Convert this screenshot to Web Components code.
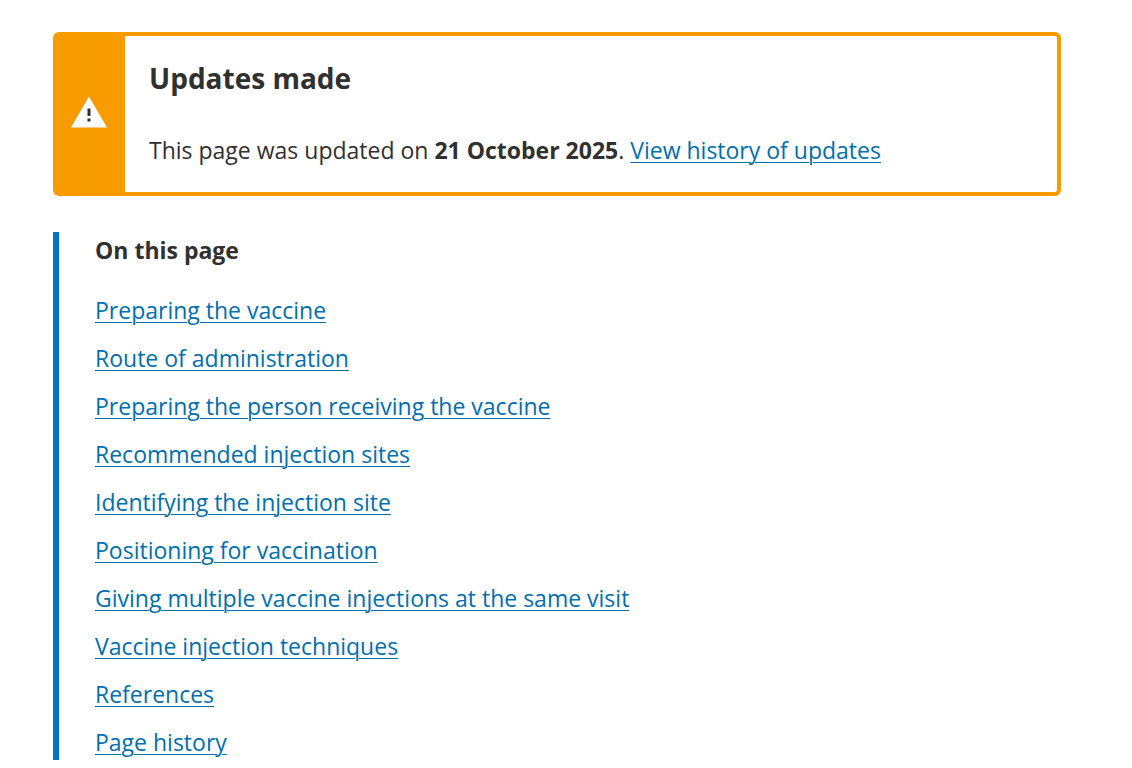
<!DOCTYPE html>
<html lang="en">
<head>
<meta charset="utf-8">
<title>Updates made</title>
<style>
  body {
    margin: 0;
    background: #fff;
    color: #303030;
    font-family: "Segoe UI", "Open Sans", sans-serif;
    font-size: 23px;
    line-height: 36px;
    --link: #006fb0;
    --bar: #0073c5;
    --warning: #f79b00;
  }

  main {
    display: flex;
    flex-direction: column;
    gap: 36px;
    padding: 32px 71px 8px 53px;
  }

  a {
    color: var(--link);
    text-underline-offset: 3px;
    text-decoration-thickness: 1px;
  }
</style>
</head>
<body>
<main>
  <alert-box>
    <span slot="title">Updates made</span>
    This page was updated on <strong>21 October 2025</strong>. <a href="#history">View history of updates</a>
  </alert-box>

  <page-contents>
    <span slot="title">On this page</span>
    <contents-item href="#preparing-vaccine">Preparing the vaccine</contents-item>
    <contents-item href="#route">Route of administration</contents-item>
    <contents-item href="#preparing-person">Preparing the person receiving the vaccine</contents-item>
    <contents-item href="#sites">Recommended injection sites</contents-item>
    <contents-item href="#identifying">Identifying the injection site</contents-item>
    <contents-item href="#positioning">Positioning for vaccination</contents-item>
    <contents-item href="#multiple">Giving multiple vaccine injections at the same visit</contents-item>
    <contents-item href="#techniques">Vaccine injection techniques</contents-item>
    <contents-item href="#references">References</contents-item>
    <contents-item href="#history">Page history</contents-item>
  </page-contents>
</main>

<script>
  const alertTemplate = document.createElement('template');
  alertTemplate.innerHTML = `
    <style>
      :host {
        display: flex;
        border: 4px solid var(--warning);
        border-left: 0;
        border-radius: 6px;
      }

      .icon {
        display: flex;
        align-items: center;
        justify-content: center;
        flex: none;
        width: 72px;
        background: var(--warning);
        border-radius: 2px 0 0 2px;
      }

      svg {
        display: block;
        width: 36px;
        height: 36px;
      }

      .content {
        flex: 1;
        padding: 24px;
      }

      h2 {
        margin: 0 0 36px;
        font-size: 28px;
        line-height: 36px;
      }

      p {
        margin: 0;
      }
    </style>

    <div class="icon">
      <svg viewBox="0 0 36 36" aria-hidden="true">
        <path d="M18 0.5L36 31.5H0z" fill="#fff"/>
        <path d="M16.5 12.5h3v7.5h-3zM16.5 22.5h3v3h-3z" fill="#303030"/>
      </svg>
    </div>
    <div class="content">
      <h2><slot name="title"></slot></h2>
      <p><slot></slot></p>
    </div>
  `;

  class AlertBox extends HTMLElement {
    constructor() {
      super();
      this.attachShadow({ mode: 'open' }).appendChild(
        alertTemplate.content.cloneNode(true)
      );
    }
  }

  const contentsTemplate = document.createElement('template');
  contentsTemplate.innerHTML = `
    <style>
      :host {
        display: block;
        padding-left: 36px;
        border-left: 6px solid var(--bar);
      }

      h2 {
        margin: 0 0 24px;
        font-size: inherit;
      }

      .list {
        display: flex;
        flex-direction: column;
        gap: 12px;
      }
    </style>

    <nav aria-labelledby="title">
      <h2 id="title"><slot name="title"></slot></h2>
      <div class="list" role="list"><slot></slot></div>
    </nav>
  `;

  class PageContents extends HTMLElement {
    constructor() {
      super();
      this.attachShadow({ mode: 'open' }).appendChild(
        contentsTemplate.content.cloneNode(true)
      );
    }
  }

  const itemTemplate = document.createElement('template');
  itemTemplate.innerHTML = `
    <style>
      :host {
        display: block;
      }

      a {
        color: var(--link);
        text-underline-offset: 3px;
        text-decoration-thickness: 1px;
      }
    </style>

    <a><slot></slot></a>
  `;

  class ContentsItem extends HTMLElement {
    constructor() {
      super();
      this.attachShadow({ mode: 'open' }).appendChild(
        itemTemplate.content.cloneNode(true)
      );
    }

    connectedCallback() {
      this.setAttribute('role', 'listitem');
      this.shadowRoot.querySelector('a').href = this.getAttribute('href');
    }
  }

  customElements.define('alert-box', AlertBox);
  customElements.define('page-contents', PageContents);
  customElements.define('contents-item', ContentsItem);
</script>
</body>
</html>
